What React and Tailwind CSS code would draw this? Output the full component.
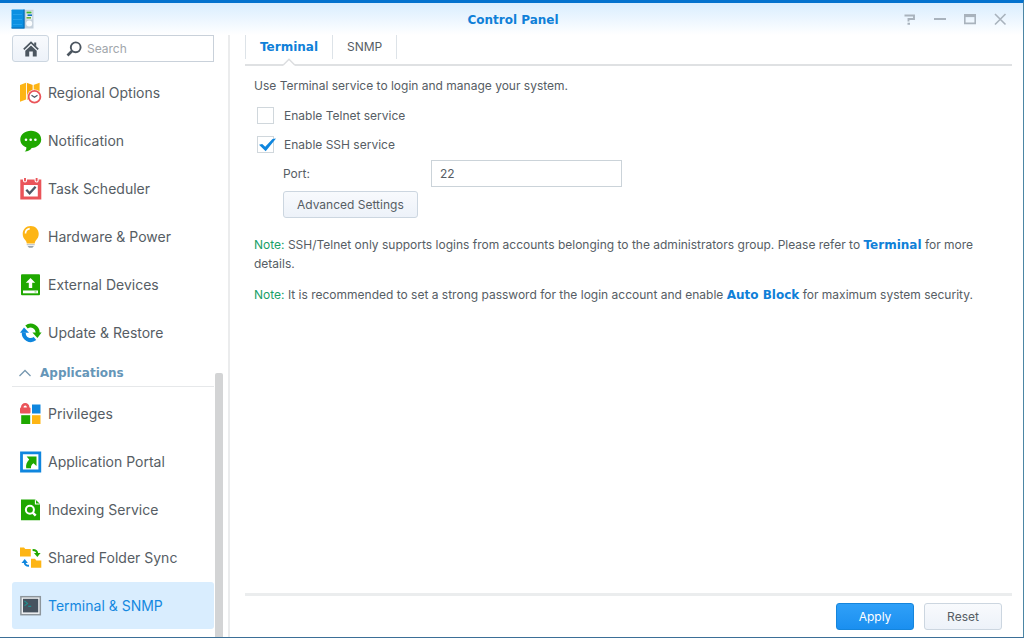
import { useState } from "react";

const GREEN = "#1fa800";
const BLUE = "#0f86de";
const YELLOW = "#fdb515";
const RED = "#ea5459";

function Icon({ children }) {
  return (
    <svg viewBox="0 0 22 22" className="h-[22px] w-[22px] shrink-0" aria-hidden="true">
      {children}
    </svg>
  );
}

const icons = {
  regional: (
    <Icon>
      <path d="M0 3 6 0.8V17.5L0 19.8Z" fill={YELLOW} />
      <path d="M6.6 0.8 12.8 3V19L6.6 17.5Z" fill="#f9a70a" />
      <path d="M13.4 3 19.6 0.8V17L13.400 19Z" fill={YELLOW} />
      <path d="M6.500 1v17M13.200 2.600v6" stroke="#fff" strokeWidth="0.700" />
      <circle cx="14.500" cy="14.700" r="7.300" fill="#fff" />
      <circle cx="14.500" cy="14.700" r="5.900" fill="#fff" stroke={RED} strokeWidth="1.800" />
      <path d="m11.500 13.200 3 2 3-2" fill="none" stroke="#4c5966" strokeWidth="1.300" />
    </Icon>
  ),
  notification: (
    <Icon>
      <path d="M11 0.800C5 0.800 0.300 4.700 0.300 9.500c0 3.700 2.300 6.500 6 7.800 0.200 1.800-0.300 3.200-1.600 4.300 3.500-0.200 5.600-1.600 7-3.600 5.600-0.400 9.500-3.900 9.500-8.500C21.200 4.700 17 0.800 11 0.800Z" fill={GREEN} />
      <circle cx="6" cy="9.800" r="1.300" fill="#fff" />
      <circle cx="10.700" cy="9.800" r="1.300" fill="#fff" />
      <circle cx="15.400" cy="9.800" r="1.300" fill="#fff" />
    </Icon>
  ),
  task: (
    <Icon>
      <path d="M0.300 1.500h21v20h-21Z" fill={RED} />
      <path d="M3.800 7h14v11.500h-14Z" fill="#fff" />
      <path d="M3.500 0v2.500a1.500 1.500 0 0 0 3 0V0M15.100 0v2.500a1.500 1.500 0 0 0 3 0V0" fill={RED} stroke="#fff" strokeWidth="1.100" />
      <path d="m6.300 11.800 3.300 3.500 6-6.600" fill="none" stroke="#4c5966" strokeWidth="2.300" />
    </Icon>
  ),
  bulb: (
    <Icon>
      <path d="M10.700 0C6 0 2.700 3.500 2.700 8c0 3 1.300 4.600 2.700 6.300 0.800 1 1.300 2 1.300 3.200h8c0-1.200 0.500-2.200 1.300-3.200C17.400 12.600 18.700 11 18.700 8c0-4.500-3.300-8-8-8Z" fill={YELLOW} />
      <path d="M5.500 7.500c0-2.700 1.700-4.500 4.200-4.900" fill="none" stroke="#fff" strokeWidth="1.600" />
      <path d="M6.700 18h8v1.300h-8Z" fill="#c3c9ce" />
      <path d="M7.500 19.900h6.400l-1.500 1.800H9Z" fill="#99a4ad" />
    </Icon>
  ),
  external: (
    <Icon>
      <rect x="1" y="0.300" width="19" height="21" rx="1" fill={GREEN} />
      <path d="m10.500 4 4.700 4.800h-3V14H8.800V8.800h-3Z" fill="#fff" />
      <path d="M3 16.500h15v2.800H3Z" fill="#fff" />
      <path d="M14.500 17.400h2v1h-2Z" fill="#7fd069" />
    </Icon>
  ),
  update: (
    <Icon>
      <path d="M3.800 10.500a6.900 6.900 0 0 0 11.200 6" fill="none" stroke={BLUE} strokeWidth="4" />
      <path d="m0 10.700 4-5.300 5 5.300Z" fill={BLUE} />
      <path d="M17.600 11.300A7 7 0 0 0 6.500 5" fill="none" stroke={GREEN} strokeWidth="4" />
      <path d="m21.600 10.500-4.200 5.600-5-5.600Z" fill={GREEN} />
    </Icon>
  ),
  privileges: (
    <Icon>
      <rect x="0" y="4.500" width="10.500" height="6" rx="1" fill={RED} />
      <path d="M2.300 6V4.200a2.900 2.900 0 0 1 5.800 0V6" fill="none" stroke={RED} strokeWidth="2.600" />
      <path d="M12 1.500h8.500v9H12Z" fill={BLUE} />
      <path d="M1.200 12.200h9V21h-9Z" fill={GREEN} />
      <path d="M12 12.200h8.500V21H12Z" fill={YELLOW} />
    </Icon>
  ),
  portal: (
    <Icon>
      <path d="M1.500 1.800h18.300v18.200H1.500Z" fill="#fff" stroke={BLUE} strokeWidth="2.800" />
      <path d="M6.600 5.500h9.900v9.600l-3-2.900c-2 1.300-2.700 2.900-2.500 5H6.200c-0.600-3.500 0.600-6.300 3-8.800Z" fill={GREEN} />
    </Icon>
  ),
  indexing: (
    <Icon>
      <path d="M1 0.500h14.200L20 5.300V21.300H1Z" fill={GREEN} />
      <path d="M14.900 0.500V5.600H20" fill="#fff" />
      <path d="M16 1.200v3.400h3.400Z" fill={GREEN} />
      <circle cx="9.900" cy="10.800" r="4" fill="none" stroke="#fff" strokeWidth="2" />
      <path d="m12.700 13.600 3 3" stroke="#fff" strokeWidth="2.400" />
    </Icon>
  ),
  sync: (
    <Icon>
      <path d="M0 0.500h4l1.300 1.600h5.500v7.400H0Z" fill={YELLOW} />
      <path d="M11 11.800h4l1.300 1.600H21.300V20.800H11Z" fill={YELLOW} />
      <path d="M12.600 3c3 0 4.700 1 4.700 4" fill="none" stroke={GREEN} strokeWidth="1.900" />
      <path d="M14 6h6.600l-3.300 4Z" fill={GREEN} />
      <path d="M9 18.800c-3 0-4.300-1-4.300-3.500" fill="none" stroke={BLUE} strokeWidth="1.900" />
      <path d="M1.500 16h6.400l-3.200-4Z" fill={BLUE} />
    </Icon>
  ),
  terminal: (
    <Icon>
      <rect x="0.900" y="1.700" width="19.400" height="18" fill="#eef1f3" stroke="#8d959b" strokeWidth="1.500" />
      <path d="M3 3.800h15.200v13.600H3Z" fill="#47535f" />
      <path d="m4.500 6 3 2.400-3 2.400M8.200 11.400h3" fill="none" stroke="#20908f" strokeWidth="1.100" />
    </Icon>
  ),
};

const general = [
  ["regional", "Regional Options"],
  ["notification", "Notification"],
  ["task", "Task Scheduler"],
  ["bulb", "Hardware & Power"],
  ["external", "External Devices"],
  ["update", "Update & Restore"],
];

const applications = [
  ["privileges", "Privileges"],
  ["portal", "Application Portal"],
  ["indexing", "Indexing Service"],
  ["sync", "Shared Folder Sync"],
  ["terminal", "Terminal & SNMP"],
];

function NavList({ items, selected, onSelect }) {
  return (
    <ul>
      {items.map(([id, label]) => (
        <li key={id} className="h-12">
          <button
            type="button"
            onClick={() => onSelect(id)}
            className={
              "flex h-[47px] w-full items-center gap-1.5 whitespace-nowrap rounded-[3px] pl-2 text-left text-[14px] " +
              (selected === id ? "bg-[#d9edfe] text-[#1488e0]" : "text-[#565d64]")
            }
          >
            {icons[id]}
            {label}
          </button>
        </li>
      ))}
    </ul>
  );
}

function CheckRow({ label, checked, onChange }) {
  return (
    <label className="flex h-[29px] items-center gap-2.5 pl-[3px]">
      <span className="relative flex">
        <input
          type="checkbox"
          checked={checked}
          onChange={(e) => onChange(e.target.checked)}
          className="h-[17px] w-[17px] appearance-none border border-[#d0d7dc] bg-white"
        />
        {checked && (
          <svg viewBox="0 0 20 18" className="pointer-events-none absolute left-0 top-0 h-[18px] w-5" aria-hidden="true">
            <path d="M2 8.800 5.200 8 8.200 10.800 15.500 3 19 2.600 8.700 15.200Z" fill="#0f86de" />
          </svg>
        )}
      </span>
      {label}
    </label>
  );
}

function WindowButton({ label, children }) {
  return (
    <button type="button" aria-label={label} className="flex h-8 w-[30px] items-center justify-center">
      <svg viewBox="0 0 14 14" className="h-3.5 w-3.5" fill="none" stroke="#a9b3bd" strokeWidth="1.600" aria-hidden="true">
        {children}
      </svg>
    </button>
  );
}

const plainButton =
  "h-[27px] rounded-[3px] border border-[#ccd6e0] bg-gradient-to-b from-[#f8fafd] to-[#edf2f9] text-center";

const boldFace = "font-['DejaVu_Sans',Verdana,sans-serif] font-bold";

export default function App() {
  const [selected, setSelected] = useState("terminal");
  const [tab, setTab] = useState("Terminal");
  const [telnet, setTelnet] = useState(false);
  const [ssh, setSsh] = useState(true);
  const [port, setPort] = useState("22");

  return (
    <div className="flex min-h-screen flex-col border-b border-r border-t-[3px] border-b-[#3b6f97] border-r-[#4c86a4] border-t-[#0472ce] bg-white font-['Inter','DejaVu_Sans',sans-serif] text-[12px] text-[#565d64]">
      <header className="grid h-8 grid-cols-[1fr_auto_1fr] items-center bg-gradient-to-b from-[#d9edfe] to-white pl-[11px] pr-2">
        <svg viewBox="0 0 23 20" className="h-5 w-[23px]" aria-hidden="true">
          <rect x="0.500" y="0.500" width="13" height="19" rx="0.800" fill="#0b90e2" />
          <path d="M0.500 18.500h13v1h-13ZM12.500 0.500h1.300v19h-1.300Z" fill="#0869b1" />
          <path d="M2 5.500h9M2 10.500h9M2 15.500h9" stroke="#2ba4ee" strokeWidth="0.800" />
          <path d="M13.800 0.800h8.700v18.700h-8.700Z" fill="#c5d1dc" />
          <path d="M15.200 2h6v8.500h-6Z" fill="#e6eef4" />
          <path d="M15.500 3.500h5" stroke="#3eb42a" strokeWidth="1.800" />
          <path d="M16.500 6.200h4.500" stroke="#0f72c4" strokeWidth="1.600" />
          <path d="M15.500 8.800h4.500" stroke="#6fae32" strokeWidth="1.600" />
          <circle cx="18.200" cy="14.500" r="3" fill="#fafcfd" />
        </svg>
        <h1 className={"pt-px text-[12px] text-[#0f80d8] " + boldFace}>Control Panel</h1>
        <div className="flex justify-end">
          <WindowButton label="Help">
            <path d="M1.500 3.500h9.500v3.500H5.500v2.500M4.500 11.800h2.500" strokeWidth="1.900" />
          </WindowButton>
          <WindowButton label="Minimize">
            <path d="M1 7h12" strokeWidth="2" />
          </WindowButton>
          <WindowButton label="Maximize">
            <path d="M1.800 2.800h10.400v8.600H1.800Z" />
            <path d="M1 3.600h12" strokeWidth="3" />
          </WindowButton>
          <WindowButton label="Close">
            <path d="M2 2l10.500 10.500M12.500 2 2 12.500" />
          </WindowButton>
        </div>
      </header>

      <div className="flex grow">
        <aside className="flex w-[230px] shrink-0 flex-col border-r-2 border-[#ebeced]">
          <div className="flex gap-2 pl-3 pr-3.5">
            <button type="button" aria-label="Home" className={plainButton + " flex w-[37px] shrink-0 items-center justify-center"}>
              <svg viewBox="0 0 16 16" className="h-4 w-4" aria-hidden="true">
                <path d="M0.800 8.300 8 1.400l7.200 6.900" fill="none" stroke="#4c5660" strokeWidth="1.800" />
                <path d="M2.300 9.800 8 4.400l5.700 5.400V15.500H9.800V10.500H6.200v5H2.300Z" fill="#4c5660" />
                <path d="M11.200 1.500h2v4l-2-1.900Z" fill="#4c5660" />
              </svg>
            </button>
            <label className="flex h-[27px] min-w-0 grow items-center gap-[5px] border border-[#c9d1da] bg-white pl-2">
              <svg viewBox="0 0 16 16" className="h-4 w-4 shrink-0" fill="none" stroke="#4c5660" aria-hidden="true">
                <circle cx="9.700" cy="6.300" r="4.900" strokeWidth="1.900" />
                <path d="M6 10 1.500 14.500" strokeWidth="2.700" />
              </svg>
              <input type="text" aria-label="Search" placeholder="Search" className="w-full min-w-0 bg-transparent outline-none placeholder:text-[#a1a6ab]" />
            </label>
          </div>

          <div className="flex grow justify-between pr-[5px]">
            <nav className="ml-3 w-[202px] pt-[7px]">
              <NavList items={general} selected={selected} onSelect={setSelected} />
              <button
                type="button"
                className={
                  "mb-[3px] flex h-[30px] w-full items-center gap-2 border-b border-[#e6e8ea] pl-1.5 pt-0.5 text-left text-[#6596b8] " + boldFace
                }
              >
                <svg viewBox="0 0 14 10" className="h-2.5 w-3.5" fill="none" stroke="#7798b0" strokeWidth="1.300" aria-hidden="true">
                  <path d="m1.500 8 5.500-5.500L12.500 8" />
                </svg>
                Applications
              </button>
              <NavList items={applications} selected={selected} onSelect={setSelected} />
            </nav>
            <div className="flex w-2 flex-col" aria-hidden="true">
              <div className="grow-[54]" />
              <div className="grow-[46] rounded-t-[2px] bg-[#d3d4d5]" />
            </div>
          </div>
        </aside>

        <main className="ml-[15px] mr-[11px] flex min-w-0 grow flex-col">
          <div role="tablist" className="flex h-[31px] border-b-2 border-[#dfe1e3]">
            {["Terminal", "SNMP"].map((name) => (
              <button
                key={name}
                type="button"
                role="tab"
                aria-selected={tab === name}
                onClick={() => setTab(name)}
                className={
                  "relative h-6 border-r border-[#dde3e8] px-3.5 first:border-l " +
                  (tab === name ? "text-[#0f80d8] " + boldFace : "")
                }
              >
                {name}
                {tab === name && (
                  <svg viewBox="0 0 14 8" className="absolute -bottom-[7px] left-1/2 h-2 w-3.5 -translate-x-1/2" aria-hidden="true">
                    <path d="M1 7.200 7 1.200l6 6V8H1Z" fill="#fff" />
                    <path d="M1 7.200 7 1.200l6 6" fill="none" stroke="#dcdee0" strokeWidth="1.500" />
                  </svg>
                )}
              </button>
            ))}
          </div>

          <section className="grow pl-[9px] pr-3 pt-2">
            <p className="mb-[3px] leading-6">Use Terminal service to login and manage your system.</p>
            <CheckRow label="Enable Telnet service" checked={telnet} onChange={setTelnet} />
            <CheckRow label="Enable SSH service" checked={ssh} onChange={setSsh} />
            <div className="mt-px flex items-center pl-[29px]">
              <label htmlFor="port" className="w-[148px]">
                Port:
              </label>
              <input
                id="port"
                type="text"
                value={port}
                onChange={(e) => setPort(e.target.value)}
                className="h-[27px] w-[191px] border border-[#cbd3d9] px-2 outline-none"
              />
            </div>
            <button type="button" className={plainButton + " ml-[29px] mt-1 block px-[13px]"}>
              Advanced Settings
            </button>
            <div className="mt-[17px] space-y-3 leading-[19px]">
              <p>
                <span className="text-[#1aa067]">Note:</span> SSH/Telnet only supports logins from accounts belonging to the
                administrators group. Please refer to{" "}
                <a href="#terminal" className={"leading-none text-[#0f80d8] " + boldFace}>Terminal</a> for more details.
              </p>
              <p>
                <span className="text-[#1aa067]">Note:</span> It is recommended to set a strong password for the login account
                and enable{" "}
                <a href="#auto-block" className={"leading-none text-[#0f80d8] " + boldFace}>Auto Block</a> for maximum system security.
              </p>
            </div>
          </section>

          <footer className="flex justify-end gap-2.5 border-t-[3px] border-[#ebedee] pb-[7px] pr-2.5 pt-[7px]">
            <button type="button" className="h-[27px] w-[78px] rounded-[3px] border border-[#1585dc] bg-gradient-to-b from-[#2fa0f8] to-[#1a8ff0] text-white">
              Apply
            </button>
            <button type="button" className={plainButton + " w-[78px]"}>
              Reset
            </button>
          </footer>
        </main>
      </div>
    </div>
  );
}
